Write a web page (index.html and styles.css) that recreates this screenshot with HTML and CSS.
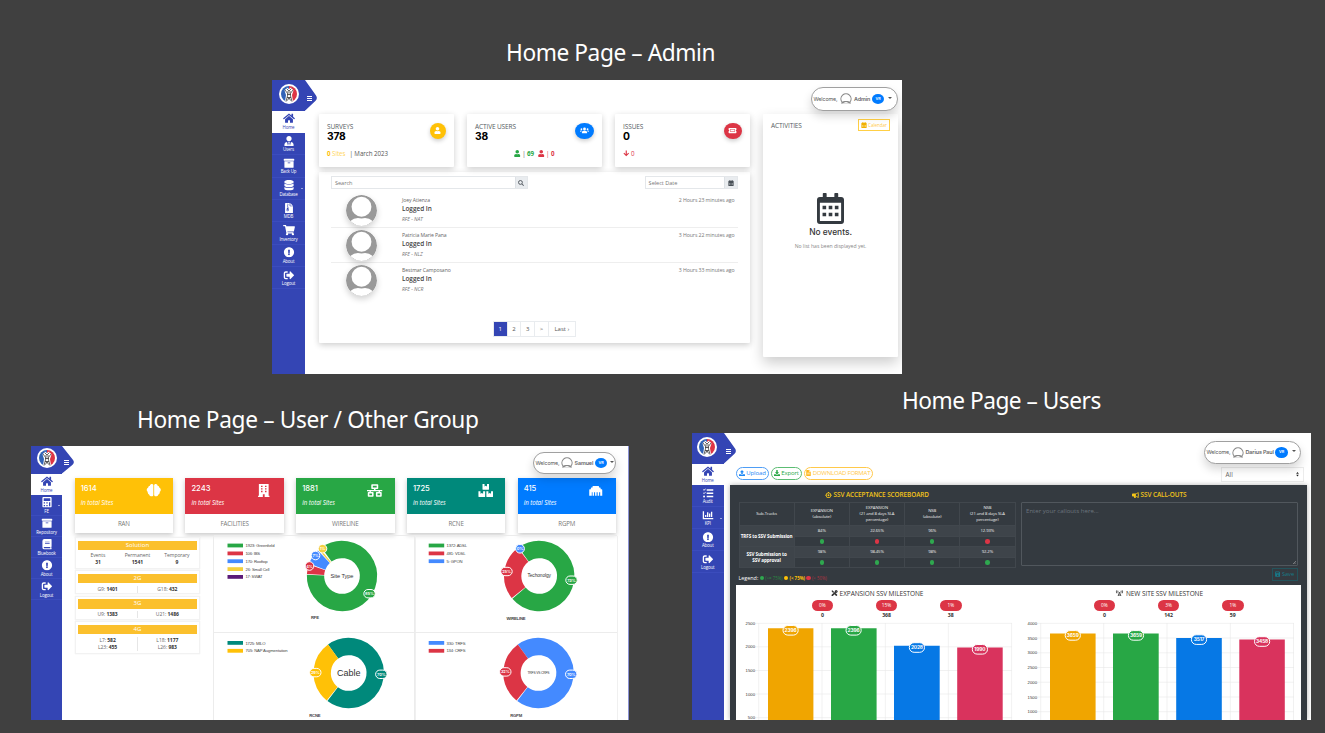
FILE: index.html
```html
<!DOCTYPE html>
<html lang="en">
<head>
<meta charset="utf-8">
<title>Home Page</title>
<link rel="stylesheet" href="styles.css">
</head>
<body>
<svg class="defs" width="0" height="0" aria-hidden="true">
  <symbol id="home" viewBox="0 0 576 512"><path d="M280.37 148.26L96 300.11V464a16 16 0 0 0 16 16l112.06-.29a16 16 0 0 0 15.92-16V368a16 16 0 0 1 16-16h64a16 16 0 0 1 16 16v95.64a16 16 0 0 0 16 16.05L464 480a16 16 0 0 0 16-16V300L295.67 148.26a12.19 12.19 0 0 0-15.3 0zM571.6 251.47L488 182.56V44.05a12 12 0 0 0-12-12h-56a12 12 0 0 0-12 12v72.61L318.47 43a48 48 0 0 0-61 0L4.34 251.47a12 12 0 0 0-1.6 16.9l25.5 31A12 12 0 0 0 45.15 301l235.22-193.74a12.19 12.19 0 0 1 15.3 0L530.9 301a12 12 0 0 0 16.9-1.6l25.5-31a12 12 0 0 0-1.7-16.93z"/></symbol>
  <symbol id="user" viewBox="0 0 448 512"><path d="M224 256c70.7 0 128-57.3 128-128S294.7 0 224 0 96 57.3 96 128s57.3 128 128 128zm89.6 32h-16.7c-22.2 10.2-46.9 16-72.9 16s-50.6-5.8-72.9-16h-16.7C60.2 288 0 348.2 0 422.4V464c0 26.5 21.5 48 48 48h352c26.5 0 48-21.5 48-48v-41.6c0-74.2-60.2-134.4-134.4-134.4z"/></symbol>
  <symbol id="tie" viewBox="0 0 448 512"><path d="M224 256c70.7 0 128-57.3 128-128S294.7 0 224 0 96 57.3 96 128s57.3 128 128 128zm95.8 32.6L272 480l-32-136 32-56h-96l32 56-32 136-47.8-191.4C56.9 292 0 350.3 0 422.4V464c0 26.5 21.5 48 48 48h352c26.5 0 48-21.5 48-48v-41.6c0-72.1-56.9-130.4-128.2-133.8z"/></symbol>
  <symbol id="archive" viewBox="0 0 512 512"><path d="M32 448c0 17.7 14.3 32 32 32h384c17.7 0 32-14.3 32-32V160H32v288zm160-212c0-6.600 5.400-12 12-12h104c6.600 0 12 5.400 12 12v8c0 6.600-5.400 12-12 12H204c-6.600 0-12-5.400-12-12v-8zM480 32H32C14.300 32 0 46.300 0 64v48c0 8.800 7.200 16 16 16h480c8.800 0 16-7.200 16-16V64c0-17.700-14.300-32-32-32z"/></symbol>
  <symbol id="db" viewBox="0 0 448 512"><path d="M448 73.143v45.714C448 159.143 347.667 192 224 192S0 159.143 0 118.857V73.143C0 32.857 100.333 0 224 0s224 32.857 224 73.143zM448 176v102.857C448 319.143 347.667 352 224 352S0 319.143 0 278.857V176c48.125 33.143 136.208 48.572 224 48.572S399.874 209.143 448 176zm0 160v102.857C448 479.143 347.667 512 224 512S0 479.143 0 438.857V336c48.125 33.143 136.208 48.572 224 48.572S399.874 369.143 448 336z"/></symbol>
  <symbol id="zip" viewBox="0 0 384 512"><path fill-rule="evenodd" d="M24 0H224V136q0 24 24 24H384V488q0 24-24 24H24q-24 0-24-24V24Q0 0 24 0zM256 0l128 128H256zM96 32h32v32H96zM128 64h32v32h-32zM96 96h32v32H96zM128 128h32v32h-32zM96 160h32v32H96zM128 192h32v40l24 110q0 58-56 58t-56-58l24-110h32zM100 330v36h56v-36z"/></symbol>
  <symbol id="cart" viewBox="0 0 576 512"><path d="M528.12 301.319l47.273-208C578.806 78.301 567.391 64 551.99 64H159.208l-9.166-44.81C147.758 8.021 137.93 0 126.529 0H24C10.745 0 0 10.745 0 24v16c0 13.255 10.745 24 24 24h69.883l70.248 343.435C147.325 417.1 136 435.222 136 456c0 30.928 25.072 56 56 56s56-25.072 56-56c0-15.674-6.447-29.835-16.824-40h209.647C430.447 426.165 424 440.326 424 456c0 30.928 25.072 56 56 56s56-25.072 56-56c0-22.172-12.888-41.332-31.579-50.405l5.517-24.276c3.413-15.018-8.002-29.319-23.403-29.319H218.117l-6.545-32h293.145c11.206 0 20.92-7.754 23.403-18.681z"/></symbol>
  <symbol id="about" viewBox="0 0 512 512"><path d="M504 256c0 136.997-111.043 248-248 248S8 392.997 8 256C8 119.083 119.043 8 256 8s248 111.083 248 248zm-248 50c-25.405 0-46 20.595-46 46s20.595 46 46 46 46-20.595 46-46-20.595-46-46-46zm-43.673-165.346l7.418 136c.347 6.364 5.609 11.346 11.982 11.346h48.546c6.373 0 11.635-4.982 11.982-11.346l7.418-136c.375-6.874-5.098-12.654-11.982-12.654h-63.383c-6.884 0-12.356 5.780-11.981 12.654z"/></symbol>
  <symbol id="logout" viewBox="0 0 512 512"><path d="M497 273L329 441c-15 15-41 4.500-41-17v-96H152c-13.300 0-24-10.700-24-24v-96c0-13.300 10.700-24 24-24h136V88c0-21.400 25.900-32 41-17l168 168c9.300 9.400 9.300 24.600 0 34zM192 436v-40c0-6.600-5.400-12-12-12H96c-17.700 0-32-14.300-32-32V160c0-17.700 14.300-32 32-32h84c6.600 0 12-5.400 12-12V76c0-6.600-5.400-12-12-12H96c-53 0-96 43-96 96v192c0 53 43 96 96 96h84c6.600 0 12-5.400 12-12z"/></symbol>
  <symbol id="calc" viewBox="0 0 448 512"><path fill-rule="evenodd" d="M48 0H400q48 0 48 48V464q0 48-48 48H48q-48 0-48-48V48Q0 0 48 0zM64 64V192H384V64zM64 256v64h64v-64zM192 256v64h64v-64zM320 256v192h64V256zM64 384v64h64v-64zM192 384v64h64v-64z"/></symbol>
  <symbol id="book" viewBox="0 0 448 512"><path fill-rule="evenodd" d="M96 0H424q24 0 24 24V360q0 14-10 20-6 34 0 64 10 4 10 20v24q0 24-24 24H96Q0 512 0 416V96Q0 0 96 0zM128 128v36H352v-36zM128 206v36H352v-36zM96 384q-32 0-32 32t32 32H384V384z"/></symbol>
  <symbol id="tasks" viewBox="0 0 512 512"><path d="M10 86l24-24 28 28 64-66 24 22-88 92zM10 246l24-24 28 28 64-66 24 22-88 92z"/><circle cx="64" cy="416" r="48"/><path d="M192 56h320v72H192zM192 220h320v72H192zM192 382h320v72H192z"/></symbol>
  <symbol id="chart" viewBox="0 0 512 512"><path d="M0 64h64v320h448v64H0zM112 240h64v96h-64zM208 112h64v224h-64zM304 176h64v160h-64zM400 80h64v256h-64z"/></symbol>
  <symbol id="users" viewBox="0 0 640 512"><circle cx="320" cy="144" r="104"/><circle cx="96" cy="160" r="64"/><circle cx="544" cy="160" r="64"/><path d="M130 448V390q0-118 118-118H392q118 0 118 118v58zM0 352V310q0-54 54-54H140q-50 40-52 96zM640 352V310q0-54-54-54H500q50 40 52 96z"/></symbol>
  <symbol id="ticket" viewBox="0 0 576 512"><path fill-rule="evenodd" d="M48 64H528q48 0 48 48v96q-48 0-48 48t48 48v96q0 48-48 48H48Q0 448 0 400V304q48 0 48-48T0 208V112Q0 64 48 64zM120 152V360H456V152zM150 182H426V330H150z"/></symbol>
  <symbol id="arrow" viewBox="0 0 448 512"><path d="M182 32h84v270l104-104 58 58-204 208L20 256l58-58 104 104z"/></symbol>
  <symbol id="search" viewBox="0 0 512 512"><circle cx="208" cy="208" r="164" fill="none" stroke="currentColor" stroke-width="76"/><path d="M312 360l48-48 144 144-48 48z"/></symbol>
  <symbol id="cal" viewBox="0 0 448 512"><path d="M48 64h48V12q0-12 12-12h40q12 0 12 12v52h128V12q0-12 12-12h40q12 0 12 12v52h48q48 0 48 48v48H0v-48q0-48 48-48z"/><path fill-rule="evenodd" d="M0 180H448V464q0 48-48 48H48Q0 512 0 464zM64 250v42h64v-42zM192 250v42h64v-42zM320 250v42h64v-42zM64 372v42h64v-42zM192 372v42h64v-42zM320 372v42h64v-42z"/></symbol>
  <symbol id="caldays" viewBox="0 0 448 512"><path fill-rule="evenodd" d="M48 64h48V12q0-12 12-12h40q12 0 12 12v52h128V12q0-12 12-12h40q12 0 12 12v52h48q48 0 48 48V464q0 48-48 48H48Q0 512 0 464V112Q0 64 48 64zM48 160V458q0 6 6 6H394q6 0 6-6V160z"/><path d="M92 212h60v56H92zM194 212h60v56h-60zM296 212h60v56h-60zM92 328h60v56H92zM194 328h60v56h-60zM296 328h60v56h-60z"/></symbol>
  <symbol id="brain" viewBox="0 0 576 512"><path d="M272 40q-36-60-92-34-40 18-44 58-64 8-66 74Q0 176 12 248q6 40 40 60-14 84 60 112 14 62 72 66 64 6 88-46zM304 40q36-60 92-34 40 18 44 58 64 8 66 74 70 38 58 110-6 40-40 60 14 84-60 112-14 62-72 66-64 6-88-46z"/></symbol>
  <symbol id="building" viewBox="0 0 448 512"><path fill-rule="evenodd" d="M32 0H416V464h32v48H260V400H188V512H0V464H32zM116 68v52h60V68zM272 68v52h60V68zM116 168v52h60v-52zM272 168v52h60v-52zM116 268v52h60v-52zM272 268v52h60v-52z"/></symbol>
  <symbol id="net" viewBox="0 0 640 512"><path fill-rule="evenodd" d="M208 0H432q32 0 32 32V160q0 32-32 32H352v40H640v56H536v32h40q32 0 32 32V480q0 32-32 32H400q-32 0-32-32V352q0-32 32-32h80V288H160v32h80q32 0 32 32V480q0 32-32 32H64q-32 0-32-32V352q0-32 32-32h40V288H0V232H288V192H208q-32 0-32-32V32Q176 0 208 0zM240 64v64H400V64zM96 384v64H208V384zM432 384v64H544V384z"/></symbol>
  <symbol id="boxes" viewBox="0 0 576 512"><path d="M160 0h80v96l48-30 48 30V0h80v208q0 16-16 16H176q-16 0-16-16zM0 288h80v96l52-30 52 30v-96h80v208q0 16-16 16H16q-16 0-16-16zM312 288h80v96l52-30 52 30v-96h80v208q0 16-16 16H328q-16 0-16-16z"/></symbol>
  <symbol id="port" viewBox="0 0 512 512"><path d="M0 464V224q0-18 18-18H64v-46q0-18 18-18h46V96q0-18 18-18H366q18 0 18 18v46h46q18 0 18 18v46h46q18 0 18 18V464h-82V320h-40V464h-60V320h-40V464h-60V320h-40V464h-60V320H100V464z"/></symbol>
  <symbol id="up" viewBox="0 0 512 512"><path d="M296 384h-80q-24 0-24-24V192H104q-28-4-12-30L242 12q14-14 28 0l150 150q16 26-12 30H320V360q0 24-24 24zM24 352H160q0 64 56 64h80q56 0 56-64H488q24 0 24 24V488q0 24-24 24H24Q0 512 0 488V376q0-24 24-24z"/></symbol>
  <symbol id="down" viewBox="0 0 512 512"><path d="M216 0h80q24 0 24 24V192h88q28 4 12 30L270 372q-14 14-28 0L92 222q-16-26 12-30h88V24Q192 0 216 0zM24 352H146q110 106 220 0H488q24 0 24 24V488q0 24-24 24H24Q0 512 0 488V376q0-24 24-24z"/></symbol>
  <symbol id="file" viewBox="0 0 384 512"><path fill-rule="evenodd" d="M24 0H224V136q0 24 24 24H384V488q0 24-24 24H24Q0 512 0 488V24Q0 0 24 0zM256 0L384 128H256zM80 230v44H304V230zM80 320v44H304V320z"/></symbol>
  <symbol id="target" viewBox="0 0 512 512"><path fill-rule="evenodd" d="M216 0h80v44q156 20 172 172h44v80h-44q-16 152-172 172v44h-80v-44Q60 448 44 296H0v-80h44Q60 64 216 44zM108 256a148 148 0 1 0 296 0a148 148 0 1 0-296 0z"/><circle cx="256" cy="256" r="76"/></symbol>
  <symbol id="horn" viewBox="0 0 576 512"><path fill-rule="evenodd" d="M512 0q32 0 32 32V190q32 20 32 50t-32 50V448q0 50-50 25L410 406q-50-40-120-44-6 60 54 118 0 32-30 32H216q-50-40-56-152H64Q0 360 0 296V184q0-64 64-64H256q90 0 154-52L494 8q8-8 18-8zM480 98q-70 60-160 74V308q90 14 160 74z"/></symbol>
  <symbol id="save" viewBox="0 0 448 512"><path fill-rule="evenodd" d="M48 32H340L448 140V432q0 48-48 48H48Q0 480 0 432V80Q0 32 48 32zM64 96V192H320V96zM224 288a64 64 0 1 0 .1 0z"/></symbol>
  <symbol id="tools" viewBox="0 0 512 512"><path d="M20 70L70 20l120 80 8 58 90 90 60-6 140 150-96 96-140-150 6-50-92-92-60-8zM340 20q70-30 130 0l-72 72 24 24 72-72q40 90-34 160-40 30-92 20L120 480q-30 24-70 0-50-50-20-100L276 150q-20-90 64-130z"/></symbol>
  <symbol id="tower" viewBox="0 0 640 512"><path fill="none" stroke="currentColor" stroke-width="66" d="M200 500L320 180 440 500M240 400h160M112 20q-70 120 0 240M528 20q70 120 0 240M208 70q-36 70 0 140M432 70q36 70 0 140"/></symbol>
  <symbol id="avatar" viewBox="0 0 100 100"><circle cx="50" cy="50" r="50" fill="#999"/><circle cx="50" cy="38" r="32" fill="#fff"/><path d="M14 84Q30 70 50 76 70 70 86 84 70 100 50 100T14 84z" fill="#fff"/></symbol>
  <symbol id="mini" viewBox="0 0 100 100"><path d="M14 82A46 46 0 1 1 86 82" fill="#fff" stroke="#888" stroke-width="10"/><path d="M4 96Q10 72 38 72h24q28 0 34 24" fill="#888"/><path d="M20 96Q50 66 80 96z" fill="#fff"/><path d="M25 44a25 28 0 1 0 50 0a25 28 0 1 0-50 0" fill="#fff"/></symbol>
  <symbol id="logo" viewBox="0 0 40 40"><circle cx="20" cy="20" r="20" fill="#fff"/><path d="M20 4a16 16 0 0 0 0 32z" fill="#3163b7"/><path d="M20 4a16 16 0 0 1 0 32z" fill="#dd3545"/><path d="M12 35l2-13-3-9 5-6 4 3 4-3 5 6-3 9 2 13q-8 3-16 0z" fill="#fff"/><path d="M12 12l6 8-4 15M28 12l-6 8 4 15M15 9l5 5 5-5M16 21h8M16 27h8M18 14v5M22 14v5M17 33l3-6 3 6" fill="none" stroke="#333" stroke-width="1.500"/></symbol>
  <symbol id="flag" viewBox="0 0 13 31" preserveAspectRatio="none"><path d="M0 0L11.300 15.500Q13.500 18.500 11 21L0 31z" fill="#3445b4"/></symbol>
</svg>

<main class="slide">
  <h1 class="title t-admin">Home Page – Admin</h1>
  <h1 class="title t-group">Home Page – User / Other Group</h1>
  <h1 class="title t-users">Home Page – Users</h1>

  <section class="win admin">
    <nav class="side">
      <div class="brand"><svg><use href="#logo"/></svg></div>
      <a class="on"><svg><use href="#home"/></svg>Home</a>
      <a><svg><use href="#tie"/></svg>Users</a>
      <a><svg><use href="#archive"/></svg>Back Up</a>
      <a class="more"><svg><use href="#db"/></svg>Database</a>
      <a><svg><use href="#zip"/></svg>MDB</a>
      <a><svg><use href="#cart"/></svg>Inventory</a>
      <a><svg><use href="#about"/></svg>About</a>
      <a><svg><use href="#logout"/></svg>Logout</a>
      <svg class="flag"><use href="#flag"/></svg><i class="burger"></i>
    </nav>
    <div class="page">
      <header class="top"><div class="pill"><span>Welcome,</span><svg><use href="#mini"/></svg><b>Admin</b><em>VR</em><i></i></div></header>
      <div class="cols">
        <div class="left">
          <div class="cards">
            <div class="card stat"><div class="row"><div><h2>SURVEYS</h2><strong>378</strong></div><span class="dot yellow"><svg><use href="#user"/></svg></span></div>
              <p><b class="c-y">0</b> <span class="c-y2">Sites</span> <span class="bar">| March 2023</span></p></div>
            <div class="card stat"><div class="row"><div><h2>ACTIVE USERS</h2><strong>38</strong></div><span class="dot blue wide"><svg><use href="#users"/></svg></span></div>
              <p class="mid"><svg class="c-g"><use href="#user"/></svg> | <b class="c-g">69</b><svg class="c-r gap"><use href="#user"/></svg> <span class="c-r">| <b>0</b></span></p></div>
            <div class="card stat"><div class="row"><div><h2>ISSUES</h2><strong>0</strong></div><span class="dot red"><svg><use href="#ticket"/></svg></span></div>
              <p class="c-r"><svg><use href="#arrow"/></svg> 0</p></div>
          </div>
          <div class="card list">
            <div class="filters">
              <div class="input search"><span>Search</span><i><svg><use href="#search"/></svg></i></div>
              <div class="input date"><span>Select Date</span><i><svg><use href="#cal"/></svg></i></div>
            </div>
            <div class="entry"><svg class="ava"><use href="#avatar"/></svg><div><p>Joey Atienza</p><b>Logged In</b><em>RFE - NAT</em></div><time>2 Hours 23 minutes ago</time></div>
            <div class="entry"><svg class="ava"><use href="#avatar"/></svg><div><p>Patricia Marie Pana</p><b>Logged In</b><em>RFE - NLZ</em></div><time>3 Hours 22 minutes ago</time></div>
            <div class="entry"><svg class="ava"><use href="#avatar"/></svg><div><p>Bestmar Camposano</p><b>Logged In</b><em>RFE - NCR</em></div><time>3 Hours 33 minutes ago</time></div>
            <div class="pager"><span class="cur">1</span><span>2</span><span>3</span><span>&gt;</span><span class="last">Last ›</span></div>
          </div>
        </div>
        <div class="card acts">
          <div class="row"><h2>ACTIVITIES</h2><span class="calbtn"><svg><use href="#cal"/></svg>Calendar</span></div>
          <div class="empty"><svg><use href="#caldays"/></svg><strong>No events.</strong><p>No list has been displayed yet.</p></div>
        </div>
      </div>
    </div>
  </section>

  <section class="win group">
    <nav class="side">
      <div class="brand"><svg><use href="#logo"/></svg></div>
      <a class="on"><svg><use href="#home"/></svg>Home</a>
      <a class="more"><svg><use href="#calc"/></svg>FE</a>
      <a><svg><use href="#archive"/></svg>Repository</a>
      <a><svg><use href="#book"/></svg>Bluebook</a>
      <a><svg><use href="#about"/></svg>About</a>
      <a><svg><use href="#logout"/></svg>Logout</a>
      <svg class="flag"><use href="#flag"/></svg><i class="burger"></i>
    </nav>
    <div class="page">
      <header class="top"><div class="pill"><span>Welcome,</span><svg><use href="#mini"/></svg><b>Samuel</b><em>VR</em><i></i></div></header>
      <div class="tiles">
        <div class="tile"><div class="face f-y"><div><strong>1614</strong><em>in total Sites</em></div><svg><use href="#brain"/></svg></div><p>RAN</p></div>
        <div class="tile"><div class="face f-r"><div><strong>2243</strong><em>in total Sites</em></div><svg><use href="#building"/></svg></div><p>FACILITIES</p></div>
        <div class="tile"><div class="face f-g"><div><strong>1881</strong><em>in total Sites</em></div><svg><use href="#net"/></svg></div><p>WIRELINE</p></div>
        <div class="tile"><div class="face f-t"><div><strong>1725</strong><em>in total Sites</em></div><svg><use href="#boxes"/></svg></div><p>RCNE</p></div>
        <div class="tile"><div class="face f-b"><div><strong>415</strong><em>in total Sites</em></div><svg><use href="#port"/></svg></div><p>RGPM</p></div>
      </div>
      <div class="lower">
        <div class="tech">
          <div class="box sol"><h3>Solution</h3><div class="three"><p>Events<b>31</b></p><p>Permanent<b>1541</b></p><p>Temporary<b>9</b></p></div></div>
          <div class="box"><h3>2G</h3><div class="two"><p>G9: <b>1401</b></p><p>G18: <b>432</b></p></div></div>
          <div class="box"><h3>3G</h3><div class="two"><p>U9: <b>1383</b></p><p>U21: <b>1486</b></p></div></div>
          <div class="box"><h3>4G</h3><div class="two"><p>L7: <b>582</b><br>L23: <b>455</b></p><p>L18: <b>1177</b><br>L26: <b>983</b></p></div></div>
        </div>
        <div class="charts">
          <svg class="cell" viewBox="213 536 201.500 96.500">
            <g class="lg"><path fill="#28a745" d="M226.500 543.600h15.500v3.800h-15.500z"/><path fill="#dc3545" d="M226.500 551.500h15.500v3.800h-15.500z"/><path fill="#448aff" d="M226.500 559.300h15.500v3.800h-15.500z"/><path fill="#f4d03f" d="M226.500 567.200h15.500v3.800h-15.500z"/><path fill="#5b1a78" d="M226.500 575h15.500v3.800h-15.500z"/>
            <text x="244.500" y="547" textLength="29">1923: Greenfield</text><text x="244.500" y="554.900" textLength="14.500">106: IBS</text><text x="244.500" y="562.700" textLength="22">170: Rooftop</text><text x="244.500" y="570.600" textLength="24">26: Small Cell</text><text x="244.500" y="578.400" textLength="17">17: SWAT</text></g>
            <g class="ring" transform="translate(341 576) rotate(-126)"><circle r="26.500" pathLength="360" stroke="#28a745" stroke-dasharray="308 52"/><circle r="26.500" pathLength="360" stroke="#dc3545" stroke-dasharray="15.500 344.500" stroke-dashoffset="-309.500"/><circle r="26.500" pathLength="360" stroke="#448aff" stroke-dasharray="26 334" stroke-dashoffset="-326.500"/><circle r="26.500" pathLength="360" stroke="#f4d03f" stroke-dasharray="3 357" stroke-dashoffset="-354"/></g>
            <text class="mid" x="341" y="578" font-size="5.700" textLength="23">Site Type</text>
            <g class="tag"><circle cx="321.500" cy="548.700" r="4.300" fill="#f4d03f"/><text x="321.500" y="550.200">1%</text><circle cx="314.500" cy="555.500" r="4.300" fill="#448aff"/><text x="314.500" y="557">7%</text><circle cx="308.500" cy="566" r="4.300" fill="#dc3545"/><text x="308.500" y="567.500">4%</text><rect x="362.800" y="589.500" width="11.400" height="8.400" rx="4.200" fill="#28a745"/><text x="368.500" y="595.200">85%</text></g>
            <text class="cap" x="310" y="619.400" textLength="8">RFE</text>
          </svg>
          <svg class="cell" viewBox="414.500 536 201.500 96.500">
            <g class="lg"><path fill="#28a745" d="M428.200 543.600h15.500v3.800h-15.500z"/><path fill="#dc3545" d="M428.200 551.500h15.500v3.800h-15.500z"/><path fill="#448aff" d="M428.200 559.300h15.500v3.800h-15.500z"/>
            <text x="446" y="547" textLength="20.500">1372: ADSL</text><text x="446" y="554.900" textLength="19">481: VDSL</text><text x="446" y="562.700" textLength="16">5: GPON</text></g>
            <g class="ring" transform="translate(538.700 576) rotate(-126)"><circle r="26.500" pathLength="360" stroke="#28a745" stroke-dasharray="265.500 94.500"/><circle r="26.500" pathLength="360" stroke="#dc3545" stroke-dasharray="91.500 268.500" stroke-dashoffset="-267"/></g>
            <text class="mid" x="538.700" y="577.300" font-size="4.800" textLength="23.500">Techonolgy</text>
            <g class="tag"><circle cx="519.500" cy="548.700" r="4.400" fill="#448aff"/><text x="519.500" y="550.200">0%</text><rect x="500.300" y="567.300" width="11.400" height="8.400" rx="4.200" fill="#dc3545"/><text x="506" y="573">25%</text><rect x="565.300" y="576" width="11.400" height="8.400" rx="4.200" fill="#28a745"/><text x="571" y="581.700">73%</text></g>
            <text class="cap" x="506" y="619.700" textLength="19">WIRELINE</text>
          </svg>
          <svg class="cell" viewBox="213 632.500 201.500 87.500">
            <g class="lg"><path fill="#00897b" d="M226.500 640.500h15.500v3.800h-15.500z"/><path fill="#ffc107" d="M226.500 648.400h15.500v3.800h-15.500z"/><text x="244.500" y="644" textLength="20">1725: MILO</text><text x="244.500" y="651.800" textLength="42">705: NAP Augmentation</text></g>
            <g class="ring" transform="translate(347.700 672.500) rotate(-126)"><circle r="26.500" pathLength="360" stroke="#00897b" stroke-dasharray="253 107"/><circle r="26.500" pathLength="360" stroke="#ffc107" stroke-dasharray="105.500 254.500" stroke-dashoffset="-254.500"/></g>
            <text class="mid" x="347.700" y="675.200" font-size="9" textLength="23.500">Cable</text>
            <g class="tag"><rect x="374.600" y="669.600" width="11.400" height="8.400" rx="4.200" fill="#00897b"/><text x="380.300" y="675.300">70%</text><rect x="308.600" y="667.900" width="11.400" height="8.400" rx="4.200" fill="#ffc107"/><text x="314.300" y="673.600">29%</text></g>
            <text class="cap" x="308.300" y="716.300" textLength="11.200">RCNE</text>
          </svg>
          <svg class="cell" viewBox="414.500 632.500 201.500 87.500">
            <g class="lg"><path fill="#448aff" d="M428.200 640.500h15.500v3.800h-15.500z"/><path fill="#dc3545" d="M428.200 648.400h15.500v3.800h-15.500z"/><text x="446" y="644" textLength="19">330: TRFS</text><text x="446" y="651.800" textLength="19">134: CRFS</text></g>
            <g class="ring" transform="translate(538 672.500) rotate(-126)"><circle r="26.500" pathLength="360" stroke="#448aff" stroke-dasharray="253 107"/><circle r="26.500" pathLength="360" stroke="#dc3545" stroke-dasharray="105.500 254.500" stroke-dashoffset="-254.500"/></g>
            <text class="mid" x="538" y="673.800" font-size="3.300" textLength="22">TRFS VS CRFS</text>
            <g class="tag"><rect x="565" y="669.600" width="11.400" height="8.400" rx="4.200" fill="#448aff"/><text x="570.700" y="675.300">70%</text><rect x="499.100" y="667.200" width="11.400" height="8.400" rx="4.200" fill="#dc3545"/><text x="504.800" y="672.900">32%</text></g>
            <text class="cap" x="509.700" y="716.300" textLength="12">RGPM</text>
          </svg>
        </div>
      </div>
    </div>
  </section>

  <section class="win users">
    <nav class="side">
      <div class="brand"><svg><use href="#logo"/></svg></div>
      <a class="on"><svg><use href="#home"/></svg>Home</a>
      <a><svg><use href="#tasks"/></svg>Audit</a>
      <a class="more"><svg><use href="#chart"/></svg>KPI</a>
      <a><svg><use href="#about"/></svg>About</a>
      <a><svg><use href="#logout"/></svg>Logout</a>
      <svg class="flag"><use href="#flag"/></svg><i class="burger"></i>
    </nav>
    <div class="page">
      <header class="top"><div class="pill"><span>Welcome,</span><svg><use href="#mini"/></svg><b>Darius Paul</b><em>VR</em><i></i></div></header>
      <div class="tools">
        <span class="btn b-b"><svg><use href="#up"/></svg>Upload</span><span class="btn b-g"><svg><use href="#down"/></svg>Export</span><span class="btn b-y"><svg><use href="#file"/></svg>DOWNLOAD FORMAT</span>
        <span class="select">All<svg viewBox="0 0 6 10"><path d="M3 0l3 4H0zM3 10l3-4H0z"/></svg></span>
      </div>
      <div class="dark">
        <div class="upper">
          <div class="score">
            <h3><svg><use href="#target"/></svg>SSV ACCEPTANCE SCOREBOARD</h3>
            <table>
              <tr class="hd"><th>Sub-Tracks</th><th>EXPANSION<br>(absolute)</th><th>EXPANSION<br>(21 and 8 days SLA<br>percentage)</th><th>NSB<br>(absolute)</th><th>NSB<br>(21 and 8 days SLA<br>percentage)</th></tr>
              <tr class="lt"><td rowspan="2" class="nm">TRFS to SSV Submission</td><td>84%</td><td>22.65%</td><td>96%</td><td>12.93%</td></tr>
              <tr><td><i class="g"></i></td><td><i class="r"></i></td><td><i class="g"></i></td><td><i class="r"></i></td></tr>
              <tr class="lt"><td rowspan="2" class="nm">SSV Submission to<br>SSV approval</td><td>98%</td><td>98.45%</td><td>98%</td><td>92.2%</td></tr>
              <tr><td><i class="g"></i></td><td><i class="g"></i></td><td><i class="g"></i></td><td><i class="g"></i></td></tr>
            </table>
            <p class="legend">Legend: <i class="g"></i><span class="c-g">(&gt;= 75%)</span><i class="y"></i><b class="c-y">(&lt; 75%)</b><i class="r"></i><span class="c-r">(&lt; 50%)</span></p>
          </div>
          <div class="calls">
            <h3><svg><use href="#horn"/></svg>SSV CALL-OUTS</h3>
            <div class="area">Enter your callouts here...<svg viewBox="0 0 6 6"><path d="M0 6L6 0M3 6l3-3" stroke="#bbb"/></svg></div>
            <span class="save"><svg><use href="#save"/></svg>Save</span>
          </div>
        </div>
        <div class="white">
          <div class="plot">
            <h4><svg><use href="#tools"/></svg>EXPANSION SSV MILESTONE</h4>
            <div class="marks"><p><em>0%</em><b>0</b></p><p><em>15%</em><b>368</b></p><p><em>1%</em><b>38</b></p></div>
            <svg class="bars" viewBox="736 620 282 100">
              <path class="grid" d="M755 623.300h257M755 646.800h257M755 670.500h257M755 694h257M755 717.700h257M758.700 623v97M822 623v97M885.300 623v97M948.300 623v97M1011.600 623v97"/>
              <g class="axis"><text x="755" y="624.800" textLength="9.500">2500</text><text x="755" y="648.300" textLength="9.500">2000</text><text x="755" y="672" textLength="9.500">1500</text><text x="755" y="695.500" textLength="9.500">1000</text><text x="755" y="719.200" textLength="7.200">500</text></g>
              <path fill="#f0a500" d="M768 628.300h45.400V720H768z"/><path fill="#28a745" d="M831 628.300h45.600V720H831z"/><path fill="#0678e5" d="M894 645.800h45.700V720H894z"/><path fill="#d9335d" d="M957.200 647.500h45.500V720h-45.500z"/>
              <g class="tag big"><rect x="783" y="625.500" width="15.200" height="9.600" rx="4.800" fill="#f0a500"/><text x="790.600" y="631.800">2396</text><rect x="846" y="625.500" width="15.200" height="9.600" rx="4.800" fill="#28a745"/><text x="853.600" y="631.800">2396</text><rect x="909.300" y="642.700" width="15.200" height="9.600" rx="4.800" fill="#0678e5"/><text x="916.900" y="649">2028</text><rect x="972.300" y="644.500" width="15.200" height="9.600" rx="4.800" fill="#d9335d"/><text x="979.900" y="650.800">1990</text></g>
            </svg>
          </div>
          <div class="plot">
            <h4><svg><use href="#tower"/></svg>NEW SITE SSV MILESTONE</h4>
            <div class="marks"><p><em>0%</em><b>0</b></p><p><em>3%</em><b>142</b></p><p><em>1%</em><b>59</b></p></div>
            <svg class="bars" viewBox="1018 620 282 100">
              <path class="grid" d="M1037 623.300h257M1037 638h257M1037 652.800h257M1037 667.500h257M1037 682.200h257M1037 697h257M1037 711.700h257M1040.700 623v97M1103.700 623v97M1167 623v97M1230.300 623v97M1293.500 623v97"/>
              <g class="axis"><text x="1037" y="624.800" textLength="9.500">4000</text><text x="1037" y="639.500" textLength="9.500">3500</text><text x="1037" y="654.300" textLength="9.500">3000</text><text x="1037" y="669" textLength="9.500">2500</text><text x="1037" y="683.700" textLength="9.500">2000</text><text x="1037" y="698.500" textLength="9.500">1500</text><text x="1037" y="713.200" textLength="9.500">1000</text></g>
              <path fill="#f0a500" d="M1050 633.500h45.600V720H1050z"/><path fill="#28a745" d="M1113 633.500h45.700V720H1113z"/><path fill="#0678e5" d="M1176.200 638h45.600V720h-45.600z"/><path fill="#d9335d" d="M1239.300 639.500h45.500V720h-45.500z"/>
              <g class="tag big"><rect x="1065.200" y="630.600" width="15.200" height="9.600" rx="4.800" fill="#f0a500"/><text x="1072.800" y="636.900">3659</text><rect x="1128.400" y="630.600" width="15.200" height="9.600" rx="4.800" fill="#28a745"/><text x="1136" y="636.900">3659</text><rect x="1191.400" y="634.800" width="15.200" height="9.600" rx="4.800" fill="#0678e5"/><text x="1199" y="641.100">3517</text><rect x="1254.500" y="636.700" width="15.200" height="9.600" rx="4.800" fill="#d9335d"/><text x="1262.100" y="643">3458</text></g>
            </svg>
          </div>
        </div>
      </div>
    </div>
  </section>
</main>
</body>
</html>
```
FILE: styles.css
```css
* { box-sizing: border-box; margin: 0; padding: 0; }
body { background: #404040; font-family: "Open Sans", "Noto Sans", sans-serif; overflow: hidden; }
svg { display: block; fill: currentColor; flex: none; }
.defs { position: absolute; }
.slide { position: relative; width: 1325px; height: 733px; overflow: hidden; background: #404040; }
.title { position: absolute; color: #fff; font: 400 22.700px/32px "Noto Sans", sans-serif; white-space: nowrap; }
.t-admin { left: 506px; top: 37px; letter-spacing: -.43px; }
.t-group { left: 137px; top: 404px; letter-spacing: -.34px; }
.t-users { left: 902px; top: 385px; letter-spacing: -.5px; }

/* the three windows sit freely on the slide */
.win { position: absolute; display: flex; background: #fff; overflow: hidden; color: #555; white-space: nowrap; }
.admin { left: 272px; top: 80px; width: 630px; height: 294px; --side: 33px; --head: 30.700px; --item: 22.350px; }
.group { left: 31px; top: 446px; width: 598px; height: 274px; --side: 31px; --head: 27.500px; --item: 21px; border-right: 1px solid #8b93d6; }
.users { left: 692px; top: 433px; width: 619px; height: 287px; --side: 31.500px; --head: 30.500px; --item: 21.900px; }

.side { position: relative; width: var(--side); flex: none; background: #3445b4; color: #fff; z-index: 2; }
.brand { height: var(--head); padding-left: 6.500px; padding-top: 3.700px; }
.group .brand { padding-top: 2px; padding-left: 6px; }
.users .brand { padding-left: 5px; }
.brand svg { width: 20px; height: 20px; }
.side a { display: flex; flex-direction: column; align-items: center; height: var(--item); padding-top: 2.600px; font-size: 4.400px; line-height: 6px; letter-spacing: -.15px; border-bottom: .5px solid #3b4cbd; position: relative; }
.side a svg { width: 12px; height: 10.500px; }
.side .on { background: #fff; color: #3445b4; border: 0; }
.side .more::after { content: ""; position: absolute; right: 2px; top: 10.500px; border: 1px solid transparent; border-top-color: #fff; }
.flag { position: absolute; left: 100%; top: 0; width: 12.500px; height: var(--head); }
.burger { position: absolute; left: calc(100% + 2px); top: 16px; width: 5px; height: 5px; border-top: 1px solid #fff; border-bottom: 1px solid #fff; background: linear-gradient(#fff, #fff) 0 50%/100% 1px no-repeat; }
.group .burger { top: 14px; }

.page { flex: 1; min-width: 0; display: flex; flex-direction: column; }
.top { display: flex; justify-content: flex-end; align-items: flex-start; height: 34.300px; padding: 7px 4px 0 0; position: relative; z-index: 1; }
.pill { display: flex; align-items: center; width: 87px; height: 23.500px; border: 1px solid #a0a0a0; border-radius: 12px; background: #fff; box-shadow: 0 5px 10px rgba(0,0,0,.16); padding-left: 1.500px; font: 5.300px/10px Inter, sans-serif; letter-spacing: -.1px; }
.pill span { width: 26.500px; }
.pill svg { width: 12px; height: 11px; margin-right: 2px; }
.pill b { font-weight: 600; font-size: 5.400px; color: #666; }
.pill em { width: 12.500px; height: 10.500px; border-radius: 50%; background: #007bff; color: #fff; font: 600 3.800px/10.500px Inter, sans-serif; text-align: center; margin-left: 1.500px; }
.pill i { border: 2px solid transparent; border-top-color: #555; margin: 0 0 0 4px; }

.card { background: #fff; box-shadow: 0 2px 6px rgba(0,0,0,.2); border-radius: 1px; }
.row { display: flex; justify-content: space-between; }
h2 { font-size: 6.500px; font-weight: 400; line-height: 8px; color: #555c63; letter-spacing: -.12px; }
.c-y { color: #ffc107; } .c-y2 { color: #ffd65c; } .c-g { color: #28a745; } .c-r { color: #dc3545; }

/* admin */
.cols { display: flex; gap: 13.500px; padding: 0 4px 0 14px; }
.left { width: 431px; }
.cards { display: flex; gap: 13.500px; }
.stat { flex: 1; height: 53px; padding: 8.500px 8px 0; }
.stat strong { display: block; font: 700 10.300px/10px Inter, sans-serif; color: #000; letter-spacing: -.2px; }
.dot { width: 16px; height: 16px; border-radius: 50%; display: grid; place-items: center; color: #fff; box-shadow: 0 2px 4px rgba(0,0,0,.2); }
.dot svg { width: 9px; height: 7px; }
.dot.wide { width: 18.500px; } .dot.red { width: 17.500px; }
.yellow { background: #ffc107; } .blue { background: #007bff; } .red { background: #dc3545; }
.stat p { font-size: 6.200px; line-height: 8px; margin-top: 9.700px; letter-spacing: -.05px; }
.stat p svg { display: inline-block; width: 6.500px; height: 7px; vertical-align: -1px; }
.stat .mid { text-align: center; } .stat .gap { margin-left: 4px; } .stat .bar { margin-left: 2.500px; }
.list { height: 171px; margin-top: 5px; padding: 4px 12px 0; display: flex; flex-direction: column; }
.filters { display: flex; justify-content: space-between; margin-bottom: 3.700px; }
.input { display: flex; height: 13px; border: .5px solid #e4e7ea; font-size: 5.600px; line-height: 12px; color: #777; padding-left: 3px; justify-content: space-between; letter-spacing: -.05px; }
.search { width: 197px; } .date { width: 93px; }
.input i { width: 12.500px; background: #e9ecef; border-left: .5px solid #dde1e5; display: grid; place-items: center; color: #495057; }
.input svg { width: 6px; height: 6px; }
.entry { display: flex; height: 35px; border-bottom: 1px solid #eee; padding: 1px 3px 0 15px; }
.entry:nth-child(4) { border: 0; }
.ava { width: 31px; height: 31px; margin-top: 1.300px; margin-right: 25px; border-radius: 50%; box-shadow: 0 3px 6px rgba(0,0,0,.18); }
.entry div { flex: 1; font-size: 5.100px; padding-top: 2px; }
.entry p { line-height: 8px; color: #666; letter-spacing: -.06px; }
.entry b { display: block; font-size: 6.400px; line-height: 9px; color: #444; font-weight: 600; }
.entry em { display: block; line-height: 12px; font-size: 5px; color: #777; }
.entry time { font-size: 5.200px; line-height: 8px; padding-top: 2px; color: #777; letter-spacing: -.08px; }
.pager { display: flex; align-self: center; margin-top: 23.500px; height: 15.500px; font-size: 6px; line-height: 15px; border: .5px solid #e9ecef; }
.pager span { width: 13.800px; text-align: center; border-right: .5px solid #e9ecef; }
.pager .last { width: 26px; border: 0; } .pager .cur { background: #3445b4; color: #fff; }
.acts { width: 135px; height: 242.500px; padding: 4.500px 8px; box-shadow: 0 6px 14px rgba(0,0,0,.2); }
.acts h2 { margin-top: 3.200px; }
.calbtn { width: 32.500px; height: 12.500px; border: 1px solid #ffcf45; display: flex; align-items: center; justify-content: center; gap: 1.500px; font-size: 4.500px; color: #ffc94a; }
.calbtn svg { width: 6px; height: 6px; color: #f2b200; }
.empty { display: flex; flex-direction: column; align-items: center; padding-top: 61.500px; }
.empty svg { width: 27px; height: 31px; color: #343a40; }
.empty strong { font: 500 8.400px/12px Inter, sans-serif; color: #333; margin-top: 2px; }
.empty p { font-size: 5.100px; line-height: 8px; margin-top: 3.800px; color: #888; }

/* user / other group */
.group .top { height: 31.500px; padding: 5.500px 12px 0 0; }
.group .pill { width: 83px; height: 22.500px; }
.group .pill span, .users .pill span { width: 25px; }
.group .pill i { margin-left: 3px; }
.tiles { display: flex; gap: 12.400px; padding: 0 12px 0 12.700px; }
.tile { flex: 1; height: 55px; box-shadow: 0 2px 5px rgba(0,0,0,.22); background: #fff; }
.face { display: flex; justify-content: space-between; height: 36px; padding: 6px 12px 0 6px; color: #fff; }
.face strong { display: block; font: 500 7.600px/10px Inter, sans-serif; }
.face em { display: block; font-size: 6.200px; line-height: 8px; margin-top: 5.500px; letter-spacing: -.05px; }
.face svg { width: 15.500px; height: 13px; }
.f-y { background: #ffc107; } .f-r { background: #dc3545; } .f-g { background: #28a745; } .f-t { background: #00897b; } .f-b { background: #007bff; }
.tile p { text-align: center; font-size: 6.200px; line-height: 19px; color: #777; letter-spacing: -.15px; }
.lower { display: flex; justify-content: space-between; margin-top: 3.500px; padding: 0 11.500px 0 12.700px; }
.tech { width: 125.500px; display: flex; flex-direction: column; gap: 1.500px; padding-top: .5px; }
.box { border: .5px solid #f2f2f2; box-shadow: 0 0 1px rgba(0,0,0,.1); height: 24px; padding: 2.500px 2.500px; font: 5px/7.300px "Open Sans", sans-serif; color: #666; letter-spacing: -.05px; }
.box.sol { height: 32px; padding-top: 3px; } .box:last-child { height: 32.500px; }
.box h3 { background: #fbc02d; color: #fff; font: 400 6px/9.500px "Open Sans", sans-serif; text-align: center; height: 9.500px; letter-spacing: .05px; }
.three, .two { display: flex; text-align: center; padding-top: 2px; }
.three p, .two p { flex: 1; }
.three b { display: block; }
.box b { color: #333; font-weight: 700; }
.two { padding-top: 2.500px; } .two p + p { border-left: .5px solid #e6e6e6; }
.charts { display: grid; grid-template-columns: 201.500px 201.500px; grid-template-rows: 96.500px 87.500px; }
.cell { width: 100%; height: 100%; border: 0; box-shadow: -1px 0 #ececec, 0 -1px #ececec, 1px 0 #f0f0f0; overflow: hidden; }
.cell text { font-family: "Liberation Sans", sans-serif; }
.lg text { font-size: 4.200px; fill: #444; }
.ring circle { fill: none; stroke-width: 17.300; }
.cell .mid { text-anchor: middle; fill: #333; }
.tag { stroke: #fff; stroke-width: 1; }
.cell .tag text, .tag text { stroke: none; fill: #fff; font: 600 4px Inter, sans-serif; text-anchor: middle; letter-spacing: -.1px; }
.cap { font-size: 4.200px; font-weight: 700; fill: #444; }

/* users */
.users .top { padding: 7.500px 10.500px 0 0; height: 33.500px; }
.users .pill { width: 96.500px; }
.tools { display: flex; gap: 2.500px; padding: .5px 7px 0 12.500px; height: 18px; align-items: flex-start; }
.btn { display: flex; align-items: center; justify-content: center; gap: 1.500px; height: 12.500px; border: 1px solid; border-radius: 7px; font-size: 6px; letter-spacing: -.12px; }
.btn svg { width: 6px; height: 6px; }
.b-b { width: 32.500px; color: #1b86f5; border-color: #4e9df5; } .b-g { width: 30.500px; color: #28a745; border-color: #5cbd73; } .b-y { width: 68.500px; color: #ffc94a; letter-spacing: -.2px; }
.b-y svg { width: 5px; color: #ffb81f; }
.select { margin-left: auto; width: 83.500px; height: 14.500px; border: 1px solid #ececec; display: flex; justify-content: space-between; align-items: center; padding: 0 4px; font-size: 6.400px; color: #666; }
.select svg { width: 3px; height: 4.500px; color: #222; }
.dark { flex: 1; margin: 0 5px 0 6.500px; background: #343a40; color: #fff; box-shadow: 0 0 5px rgba(0,0,0,.3); padding: 0 6px; display: flex; flex-direction: column; width: 576.500px; }
.upper { display: flex; height: 100.500px; gap: 5px; padding-left: 2.500px; }
.score { width: 277px; }
h3 { font-size: 6.400px; font-weight: 600; }
.dark h3 { display: flex; gap: 1.500px; justify-content: center; align-items: center; height: 17.500px; padding-top: 3px; color: #f5c518; letter-spacing: -.07px; }
.dark h3 svg { width: 7px; height: 6.500px; }
table { width: 277px; table-layout: fixed; border-collapse: collapse; font-size: 4.200px; line-height: 6.300px; letter-spacing: -.08px; }
th, td { border: .5px solid #41474d; text-align: center; font-weight: 500; vertical-align: middle; height: 10.500px; color: #eee; }
.hd th { height: 23px; }
.lt td { background: #3e444a; }
td.nm { font-size: 4.600px; font-weight: 700; background: #3e444a; color: #fff; }
.dark i { display: inline-block; width: 4.500px; height: 4.500px; border-radius: 50%; vertical-align: middle; }
.dark td i { display: block; margin: auto; }
i.g { background: #2fa84f; } i.r { background: #dc3545; } i.y { background: #ffc107; }
.legend { font-size: 5.400px; line-height: 8px; margin-top: 5.800px; display: flex; align-items: center; gap: 1.200px; }
.legend span, .legend b { font-size: 4.400px; } .legend span { opacity: .7; }
.calls { width: 276.500px; margin-left: .5px; display: flex; flex-direction: column; }
.area { height: 64px; border: 1px solid #51575d; border-radius: 1px; padding: 3px 4.500px; font-size: 6.100px; line-height: 9px; color: #6c757d; position: relative; margin-left: -.5px; }
.area svg { position: absolute; right: 1px; bottom: 1px; width: 3px; height: 3px; }
.save { align-self: flex-end; width: 26px; height: 13px; margin-top: 1.500px; border: 1px solid #24535b; color: #177a89; display: flex; align-items: center; justify-content: center; gap: 1.500px; font-size: 5.600px; }
.save svg { width: 5.500px; height: 6px; }
.white { background: #fff; height: 135px; display: flex; width: 564.500px; color: #333; }
.plot { width: 282px; }
h4 { display: flex; align-items: center; justify-content: center; gap: 2px; font-size: 6.500px; font-weight: 400; height: 15px; padding-top: 1px; letter-spacing: -.07px; }
h4 svg { width: 7px; height: 6.500px; }
#tower, h4 svg:has([href="#tower"]) { width: 9px; }
.marks { display: grid; grid-template-columns: repeat(3, 64.200px); margin-left: 54.300px; height: 20px; text-align: center; }
.marks em { display: block; width: 21.500px; height: 11px; margin: .3px auto 0; border-radius: 6px; background: #dc3545; color: #fff; font: 500 4.800px/11px "Open Sans", sans-serif; }
.marks b { display: block; font-size: 5.200px; line-height: 9px; }
.bars { width: 282px; height: 100px; }
.grid { stroke: #e8e8e8; stroke-width: .6; fill: none; }
.axis text { font: 4.200px "Liberation Sans", sans-serif; fill: #333; text-anchor: end; }
.tag.big text { font-size: 4.800px; font-weight: 700; }
```
